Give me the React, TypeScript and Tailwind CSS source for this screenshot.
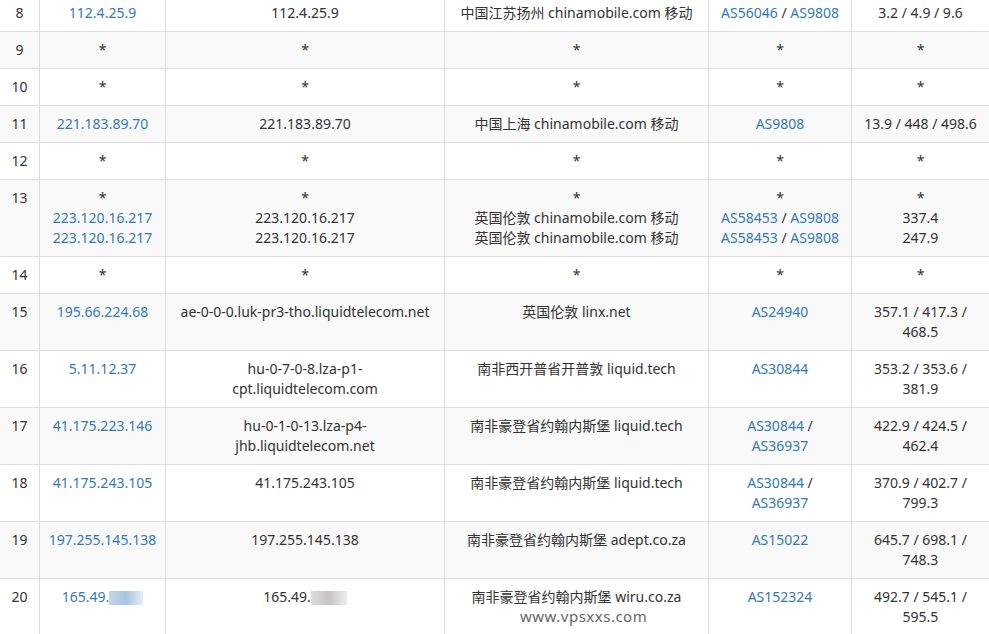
import React from "react";

type Row = { n: string; ip: string[]; host: string[]; loc: string[]; as: string[][]; t: string[]; blur?: boolean };
const rows: Row[] = [
  { n: "8", ip: ["112.4.25.9"], host: ["112.4.25.9"], loc: ["中国江苏扬州 chinamobile.com 移动"], as: [["AS56046", "AS9808"]], t: ["3.2 / 4.9 / 9.6"] },
  { n: "9", ip: ["*"], host: ["*"], loc: ["*"], as: [["*"]], t: ["*"] },
  { n: "10", ip: ["*"], host: ["*"], loc: ["*"], as: [["*"]], t: ["*"] },
  { n: "11", ip: ["221.183.89.70"], host: ["221.183.89.70"], loc: ["中国上海 chinamobile.com 移动"], as: [["AS9808"]], t: ["13.9 / 448 / 498.6"] },
  { n: "12", ip: ["*"], host: ["*"], loc: ["*"], as: [["*"]], t: ["*"] },
  { n: "13", ip: ["*", "223.120.16.217", "223.120.16.217"], host: ["*", "223.120.16.217", "223.120.16.217"], loc: ["*", "英国伦敦 chinamobile.com 移动", "英国伦敦 chinamobile.com 移动"], as: [["*"], ["AS58453", "AS9808"], ["AS58453", "AS9808"]], t: ["*", "337.4", "247.9"] },
  { n: "14", ip: ["*"], host: ["*"], loc: ["*"], as: [["*"]], t: ["*"] },
  { n: "15", ip: ["195.66.224.68"], host: ["ae-0-0-0.luk-pr3-tho.liquidtelecom.net"], loc: ["英国伦敦 linx.net"], as: [["AS24940"]], t: ["357.1 / 417.3 /", "468.5"] },
  { n: "16", ip: ["5.11.12.37"], host: ["hu-0-7-0-8.lza-p1-", "cpt.liquidtelecom.com"], loc: ["南非西开普省开普敦 liquid.tech"], as: [["AS30844"]], t: ["353.2 / 353.6 /", "381.9"] },
  { n: "17", ip: ["41.175.223.146"], host: ["hu-0-1-0-13.lza-p4-", "jhb.liquidtelecom.net"], loc: ["南非豪登省约翰内斯堡 liquid.tech"], as: [["AS30844 /"], ["AS36937"]], t: ["422.9 / 424.5 /", "462.4"] },
  { n: "18", ip: ["41.175.243.105"], host: ["41.175.243.105"], loc: ["南非豪登省约翰内斯堡 liquid.tech"], as: [["AS30844 /"], ["AS36937"]], t: ["370.9 / 402.7 /", "799.3"] },
  { n: "19", ip: ["197.255.145.138"], host: ["197.255.145.138"], loc: ["南非豪登省约翰内斯堡 adept.co.za"], as: [["AS15022"]], t: ["645.7 / 698.1 /", "748.3"] },
  { n: "20", ip: ["165.49."], host: ["165.49."], loc: ["南非豪登省约翰内斯堡 wiru.co.za"], as: [["AS152324"]], t: ["492.7 / 545.1 /", "595.5"], blur: true },
];

const link = "text-[#337ab7]";

function AsLine({ parts }: { parts: string[] }) {
  if (parts[0] === "*") return <div>*</div>;
  return (
    <div>
      {parts.map((p, i) => {
        const slash = p.endsWith(" /");
        const name = slash ? p.slice(0, -2) : p;
        return (
          <span key={i}>
            {i > 0 && <span> / </span>}
            <span className={link}>{name}</span>
            {slash && <span> /</span>}
          </span>
        );
      })}
    </div>
  );
}

export default function App() {
  return (
    <div className="relative w-[989px] h-[634px] overflow-hidden bg-white text-[14px] leading-[20px] text-[#333]" style={{ fontFamily: '"Noto Sans","Noto Sans CJK SC",sans-serif' }}>
      <table className="table-fixed border-collapse w-[990px] -mt-[6px] -ml-px">
        <colgroup>
          <col className="w-[40px]" />
          <col className="w-[126px]" />
          <col className="w-[279px]" />
          <col className="w-[264px]" />
          <col className="w-[143px]" />
          <col className="w-[138px]" />
        </colgroup>
        <tbody>
          {rows.map((r, i) => (
            <tr key={r.n} className={i % 2 === 1 ? "bg-[#f9f9f9]" : "bg-white"}>
              <td className="border border-[#ddd] px-2 py-2 align-top text-center">{r.n}</td>
              <td className={`border border-[#ddd] px-2 py-2 align-top text-center ${link}`}>
                {r.ip.map((x, k) => (
                  <div key={k} className={x === "*" ? "text-[#333]" : ""}>
                    {x}
                    {r.blur && <span className="inline-block align-middle w-[34px] h-[14px] bg-gradient-to-r from-[#c5d6e8] via-[#a9c4de] to-[#e6eef6]" />}
                  </div>
                ))}
              </td>
              <td className="border border-[#ddd] px-2 py-2 align-top text-center">
                {r.host.map((x, k) => (
                  <div key={k}>
                    {x}
                    {r.blur && <span className="inline-block align-middle w-[36px] h-[14px] bg-gradient-to-r from-[#ddd] via-[#c8c2c2] to-[#eee]" />}
                  </div>
                ))}
              </td>
              <td className="border border-[#ddd] px-2 py-2 align-top text-center">
                {r.loc.map((x, k) => <div key={k}>{x}</div>)}
              </td>
              <td className="border border-[#ddd] px-2 py-2 align-top text-center">
                {r.as.map((x, k) => <AsLine key={k} parts={x} />)}
              </td>
              <td className="border border-[#ddd] px-2 py-2 align-top text-center">
                {r.t.map((x, k) => <div key={k}>{x}</div>)}
              </td>
            </tr>
          ))}
        </tbody>
      </table>
      <div className="absolute left-[520px] top-[606px] text-[15px] tracking-[0.5px] text-[#666]">www.vpsxxs.com</div>
    </div>
  );
}
